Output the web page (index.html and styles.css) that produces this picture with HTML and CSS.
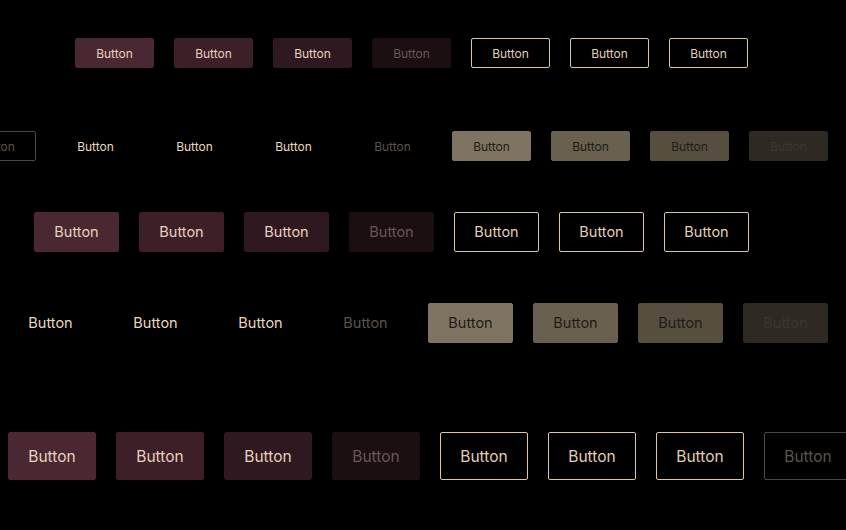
FILE: index.html
```html
<!DOCTYPE html>
<html lang="en">
<head>
<meta charset="utf-8">
<title>Buttons</title>
<link rel="stylesheet" href="styles.css">
</head>
<body>
<main class="page">
  <div class="row row-1">
    <button class="btn sm filled f1">Button</button>
    <button class="btn sm filled f2">Button</button>
    <button class="btn sm filled f3">Button</button>
    <button class="btn sm filled f4">Button</button>
    <button class="btn sm outline">Button</button>
    <button class="btn sm outline">Button</button>
    <button class="btn sm outline">Button</button>
  </div>
  <div class="row row-2">
    <button class="btn sm outline disabled">Button</button>
    <button class="btn sm text">Button</button>
    <button class="btn sm text">Button</button>
    <button class="btn sm text">Button</button>
    <button class="btn sm text disabled">Button</button>
    <button class="btn sm tonal t1">Button</button>
    <button class="btn sm tonal t2">Button</button>
    <button class="btn sm tonal t3">Button</button>
    <button class="btn sm tonal t4">Button</button>
  </div>
  <div class="row row-3">
    <button class="btn md filled f1">Button</button>
    <button class="btn md filled f2">Button</button>
    <button class="btn md filled f3">Button</button>
    <button class="btn md filled f4">Button</button>
    <button class="btn md outline">Button</button>
    <button class="btn md outline">Button</button>
    <button class="btn md outline">Button</button>
  </div>
  <div class="row row-4">
    <button class="btn md outline disabled">Button</button>
    <button class="btn md text">Button</button>
    <button class="btn md text">Button</button>
    <button class="btn md text">Button</button>
    <button class="btn md text disabled">Button</button>
    <button class="btn md tonal t1">Button</button>
    <button class="btn md tonal t2">Button</button>
    <button class="btn md tonal t3">Button</button>
    <button class="btn md tonal t4">Button</button>
  </div>
  <div class="row row-5">
    <button class="btn lg filled f1">Button</button>
    <button class="btn lg filled f2">Button</button>
    <button class="btn lg filled f3">Button</button>
    <button class="btn lg filled f4">Button</button>
    <button class="btn lg outline">Button</button>
    <button class="btn lg outline">Button</button>
    <button class="btn lg outline">Button</button>
    <button class="btn lg outline disabled">Button</button>
  </div>
</main>
</body>
</html>
```
FILE: styles.css
```css
html, body {
  margin: 0;
  padding: 0;
  background: #000;
  overflow: hidden;
  height: 100%;
}

.page {
  padding-top: 38px;
  font-family: "Inter", "Noto Sans", sans-serif;
}

.row {
  display: flex;
  gap: 20px;
  flex-wrap: nowrap;
}

.row-1 { margin-left: 75px; margin-bottom: 63px; }
.row-2 { margin-left: -43px; margin-bottom: 51px; }
.row-3 { margin-left: 34px; margin-bottom: 51px; }
.row-4 { margin-left: -97px; margin-bottom: 89px; }
.row-5 { margin-left: 8px; }

.btn {
  flex: 0 0 auto;
  box-sizing: border-box;
  display: flex;
  align-items: center;
  justify-content: center;
  border: 1px solid transparent;
  border-radius: 2px;
  padding: 1px 0 0;
  margin: 0;
  font-family: inherit;
  font-weight: 400;
  line-height: 1;
  background: transparent;
  color: #e6d3bb;
}

.sm { width: 79px; height: 30px; font-size: 12px; }
.md { width: 85px; height: 40px; font-size: 14.5px; }
.lg { width: 88px; height: 48px; font-size: 15.5px; }

.filled { color: #e8d2bd; }
.f1 { background: #4a2831; border-color: #4a2831; }
.f2 { background: #3d1f28; border-color: #3d1f28; }
.f3 { background: #2f1820; border-color: #2f1820; }
.f4 { background: #1b0f12; border-color: #1b0f12; color: #6a5753; }

.outline { border-color: #dcc5a6; color: #e3cfb5; }
.outline.disabled { border-color: #4f463e; color: #5e544b; }

.text { color: #e9d7bf; }
.text.disabled { color: #5d534b; }

.tonal { color: #1f1b17; }
.t1 { background: #7e7461; border-color: #7e7461; }
.t2 { background: #6a604f; border-color: #6a604f; }
.t3 { background: #564f40; border-color: #564f40; }
.t4 { background: #2e2a23; border-color: #2e2a23; color: #3b362e; }
```
